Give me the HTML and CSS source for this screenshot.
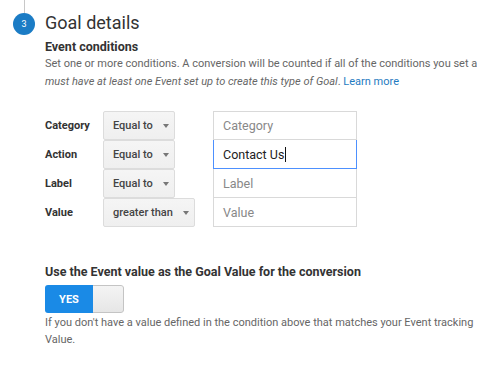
FILE: index.html
```html
<!DOCTYPE html>
<html lang="en">
  <head>
    <meta charset="UTF-8" />
    <meta name="viewport" content="width=device-width, initial-scale=1.0" />
    <title>Goal details</title>
    <link rel="stylesheet" href="styles.css">
  </head>
  <body>
    <div class="rail-line"></div>
    <div class="step-head">
      <div class="step-num">3</div>
      <h2 class="step-title">Goal details</h2>
    </div>
    <div class="step-body">
      <h3 class="sub-title">Event conditions</h3>
      <p class="help">
        Set one or more conditions. A conversion will be counted if all of the conditions you set are true when an Event is triggered. You<br />
        <em>must have at least one Event set up to create this type of Goal</em>. <a href="#" class="link">Learn more</a>
      </p>

      <div class="conditions">
        <div class="cond-label">Category</div>
        <div class="cond-op"><div class="select">Equal to <span class="arrow"></span></div></div>
        <div class="field placeholder">Category</div>

        <div class="cond-label">Action</div>
        <div class="cond-op"><div class="select">Equal to <span class="arrow"></span></div></div>
        <div class="field focus">Contact Us<span class="caret"></span></div>

        <div class="cond-label">Label</div>
        <div class="cond-op"><div class="select">Equal to <span class="arrow"></span></div></div>
        <div class="field placeholder">Label</div>

        <div class="cond-label">Value</div>
        <div class="cond-op"><div class="select">greater than <span class="arrow"></span></div></div>
        <div class="field placeholder">Value</div>
      </div>

      <h3 class="sub-title value-title">Use the Event value as the Goal Value for the conversion</h3>
      <div class="toggle">
        <div class="toggle-on">YES</div>
        <div class="toggle-knob"></div>
      </div>
      <p class="note">
        If you don't have a value defined in the condition above that matches your Event tracking<br />
        Value.
      </p>
    </div>
  </body>
</html>
```

FILE: styles.css
```css
* {
  margin: 0;
  padding: 0;
  box-sizing: border-box;
}
body {
  font-family: Roboto, "Liberation Sans", sans-serif;
  color: #333;
  background: #fff;
  overflow: hidden;
}
.rail-line {
  width: 1px;
  height: 13px;
  margin-left: 24px;
  background-color: #c8c8c8;
}
.step-head {
  display: flex;
  align-items: center;
  height: 22px;
}
.step-num {
  width: 22px;
  height: 22px;
  margin-left: 13px;
  margin-right: 10px;
  border-radius: 50%;
  background-color: #1b7cc5;
  color: white;
  font-size: 9px;
  display: flex;
  align-items: center;
  justify-content: center;
}
.step-title {
  font-size: 18px;
  font-weight: 400;
  color: #333;
  line-height: 22px;
  margin-top: -3px;
}
.step-body {
  padding-left: 45px;
  width: 600px;
}
.sub-title {
  font-size: 12.5px;
  font-weight: 700;
  color: #333;
  margin-top: 4px;
  line-height: 16px;
}
.help {
  font-size: 11px;
  line-height: 18px;
  color: #666;
  white-space: nowrap;
  margin-top: 0;
}
.link {
  color: #1f7bc1;
  text-decoration: none;
}
.conditions {
  display: grid;
  grid-template-columns: 58px 110px 144px;
  grid-auto-rows: 29px;
  margin-top: 20px;
}
.cond-label {
  font-size: 11px;
  font-weight: 700;
  color: #333;
  display: flex;
  align-items: center;
}
.cond-op {
  display: flex;
}
.select {
  display: flex;
  align-items: center;
  height: 29px;
  padding: 0 5px 0 9px;
  border: 1px solid #dcdcdc;
  border-radius: 2px;
  background: linear-gradient(#f5f5f5, #efefef);
  font-size: 11px;
  font-weight: 500;
  color: #444;
}
.arrow {
  width: 0;
  height: 0;
  margin-left: 10px;
  border-left: 3.5px solid transparent;
  border-right: 3.5px solid transparent;
  border-top: 4px solid #777;
}
.field {
  display: flex;
  align-items: center;
  height: 29px;
  padding-left: 9px;
  border: 1px solid #d9d9d9;
  font-size: 12.5px;
  color: #222;
  background: #fff;
}
.field + .cond-label + .cond-op + .field {
  border-top: none;
}
.field.focus {
  border: 1px solid #4d90fe;
}
.placeholder {
  color: #888;
}
.caret {
  display: inline-block;
  width: 1px;
  height: 15px;
  margin-left: 1px;
  background-color: #111;
}
.value-title {
  margin-top: 37px;
}
.toggle {
  display: flex;
  width: 79px;
  height: 28px;
  margin-top: 5px;
  border-radius: 3px;
  overflow: hidden;
}
.toggle-on {
  width: 48px;
  background-color: #1a8ae6;
  color: white;
  font-size: 11px;
  font-weight: 700;
  display: flex;
  align-items: center;
  justify-content: center;
}
.toggle-knob {
  flex: 1;
  background: linear-gradient(#f4f4f4, #e6e6e6);
  border: 1px solid #c4c4c4;
  border-left: none;
  border-radius: 0 3px 3px 0;
}
.note {
  font-size: 11px;
  line-height: 17px;
  color: #666;
  white-space: nowrap;
  margin-top: 1px;
}
```
